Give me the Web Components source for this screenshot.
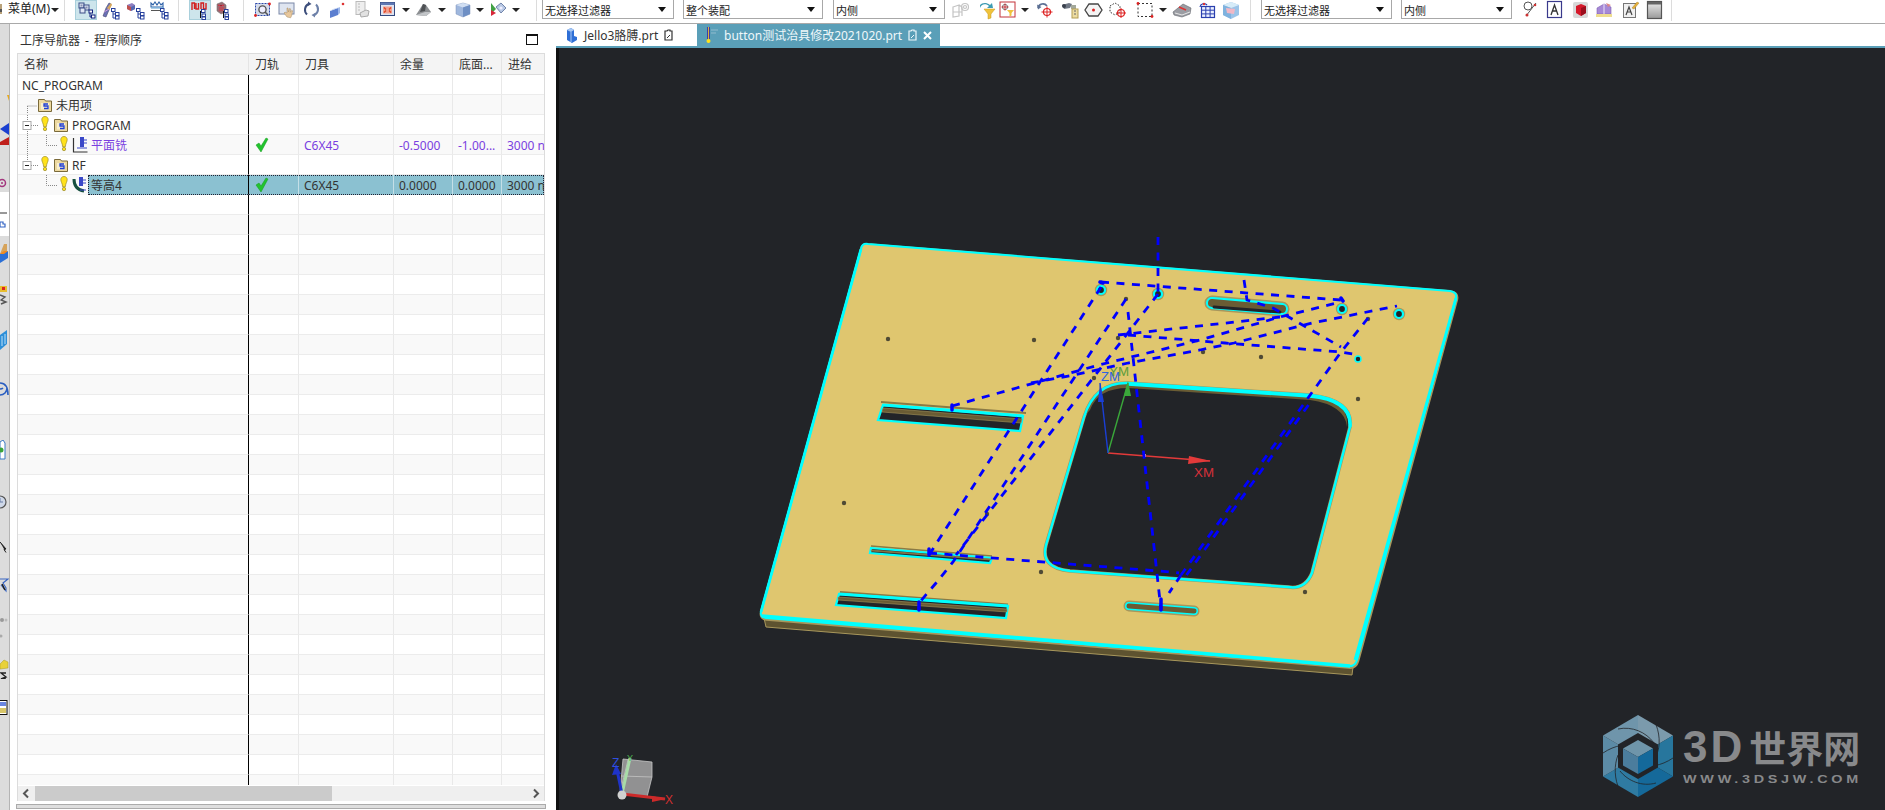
<!DOCTYPE html>
<html lang="zh">
<head>
<meta charset="utf-8">
<title>NX CAM</title>
<style>
    html, body {
        margin: 0;
        padding: 0;
        width: 1885px;
        height: 810px;
        overflow: hidden;
        background: #fff;
        font-family: "Noto Sans", "Noto Sans CJK SC", sans-serif;
        font-size: 12px;
        color: #333;
    }
    .main {
        display: flex;
        height: 786px;
    }
</style>
</head>
<body>
<nx-toolbar></nx-toolbar>
<div class="main">
    <nx-strip></nx-strip>
    <op-navigator></op-navigator>
    <nx-graphics></nx-graphics>
</div>
<script>
const tr = `<g fill="#fff" stroke="#27409c"><rect x="12.5" y="8.5" width="3.5" height="3"/><rect x="16.5" y="12.5" width="3.5" height="3"/><rect x="16.5" y="16" width="3.5" height="3"/><path d="M14 11.5V18h2M14 14h2" fill="none"/></g>`;
const tr2 = `<g fill="#fff" stroke="#27409c"><rect x="12.5" y="9.5" width="3.5" height="3"/><rect x="13" y="14" width="3.5" height="2.5"/><rect x="13" y="17" width="3.5" height="2.5"/><path d="M11.5 11v7" fill="none" stroke="#111"/></g>`;

const ICONS = {
    edge: `<rect x="16" y="4" width="6" height="10" fill="#b9a27a"/><rect x="16" y="9" width="6" height="3" fill="#555"/>`,
    ordProg: `<g fill="#dfe6f4" stroke="#3a4c86"><rect x="4" y="3" width="5" height="5"/><rect x="9" y="5" width="5" height="5"/><rect x="5" y="8" width="5" height="5"/></g>
        <g fill="#8890b0"><rect x="5.5" y="4.5" width="2" height="2"/><rect x="10.5" y="6.5" width="2" height="2"/></g>
        <g fill="#fff" stroke="#111f7c"><rect x="14" y="10" width="3.5" height="3"/><rect x="16.5" y="15" width="3.5" height="3"/><path d="M15 13v4h2" fill="none"/></g>`,
    ordMach: `<path d="M4 16l3-8 3-5 2 1-2 6-3 7z" fill="#6b70b5" stroke="#44496f" stroke-width=".6"/><path d="M8 8l4-5 1 2-3 5z" fill="#d9a85a"/><path d="M5 12l5-3" stroke="#c9d" stroke-width="1"/>${tr}`,
    ordGeom: `<path d="M3 5l5-2 3 2v4l-4 2-4-2z" fill="#8f7fc0"/><path d="M3 5l4 2v4l-4-2z" fill="#c0504d"/><path d="M7 7l4-2v4l-4 2z" fill="#5668b0"/>${tr}`,
    ordMeth: `<path d="M3 7V3l2 2 2-3 2 3 2-3 2 3 2-2v4z" fill="none" stroke="#2f62a8" stroke-width="1.1"/><rect x="3" y="7" width="13" height="1.6" fill="#7fb0d9"/><rect x="3" y="10" width="13" height="1" fill="#555"/>${tr}`,
    pathGen: `<path d="M3 10V3h2.5v6M7 3v6h2.5V3M12 9V3h2.5v6h2.5V3" fill="none" stroke="#d21f1f" stroke-width="1.4"/>${tr2}`,
    pathRep: `<path d="M5 4l5-2 4 3v7l-5 2-4-3z" fill="#9b6a72" stroke="#777" stroke-width=".6"/><path d="M6 5l3 1 3-1M7 8h5M7 10h4" stroke="#d34" stroke-width="1"/>${tr2}`,
    fitView: `<rect x="3.5" y="3.5" width="14" height="12" fill="#d5dceb" stroke="#2a47a8" stroke-dasharray="2 1"/><circle cx="10.5" cy="9.5" r="3.6" fill="#eef" stroke="#555" stroke-width="1.4"/><path d="M13 12l3 3" stroke="#555" stroke-width="1.6"/><circle cx="3.5" cy="15.5" r="1.4" fill="#d22"/><circle cx="17.5" cy="4" r="1.4" fill="#d22"/>`,
    pan: `<rect x="3" y="3" width="15" height="11" fill="#dfe5f0" stroke="#7b88a8"/><path d="M11 17l-3-4 1-1 2 1v-5l1 0 .5 4 1-3.5 1 .3-.2 3.5 1.5-2 .8.5-1 5-1 2z" fill="#e8c79c" stroke="#a58a62" stroke-width=".5"/>`,
    rotate: `<path d="M6 14.5a6.5 6.5 0 0 1 1.5-10.5" fill="none" stroke="#3d4f7c" stroke-width="2"/><path d="M15 4.5a6.5 6.5 0 0 1-1.5 10.5" fill="none" stroke="#6d80a8" stroke-width="2"/><path d="M7 1.5l3.5 2.5-3.5 2z" fill="#3d4f7c"/><path d="M14 17.5l-3.5-2.5 3.5-2z" fill="#6d80a8"/>`,
    extrude: `<path d="M4 11l8-3v7l-8 3z" fill="#5c7fd0"/><path d="M12 8l2-1v6l-2 2z" fill="#9db7ea"/><path d="M4 11l8-3 2-1-7 2z" fill="#c5d4f2"/><circle cx="17" cy="4" r="1.3" fill="#d33"/>`,
    sheet: `<rect x="5" y="1.5" width="9" height="13" fill="#eee" stroke="#bbb"/><path d="M7 4h2M7 7h2M7 10h2" stroke="#bbb"/><path d="M9 13l6-3 3 1-1 5-7 1z" fill="#e2e2e2" stroke="#aaa"/>`,
    layout: `<rect x="3.5" y="2.5" width="14" height="13" fill="#dde4f2" stroke="#35497e"/><rect x="3.5" y="2.5" width="14" height="2.5" fill="#5f78b3"/><rect x="6" y="6.5" width="9" height="7" fill="#f3a08f"/><path d="M7 7.5l2 2M14 7.5l-2 2M7 12.5l2-2M14 12.5l-2-2" stroke="#d42" stroke-width="1.2"/>`,
    shade: `<path d="M3 15l7-11 3 1 5 7-5 4z" fill="#8c8f92"/><path d="M10 4l3 1-1 6-5 1z" fill="#4e5154"/><path d="M3 15l9-3 6 0-5 4z" fill="#c2c5c8"/>`,
    cube: `<path d="M4 5l7-2 7 2v9l-7 3-7-3z" fill="#9fb7dd" stroke="#7c93bb" stroke-width=".5"/><path d="M4 5l7 2.5 7-2.500-7-2z" fill="#d0def2"/><path d="M11 7.500V17l7-3V5z" fill="#6e8fc4"/>`,
    visual: `<path d="M9 7l5-4 5 5-5 5z" fill="#b8c8e4" stroke="#7285ab"/><path d="M4 3v11l5-5z" fill="#41a144"/><path d="M4 16l5-3-5-3z" fill="#d8283a"/><circle cx="14" cy="8" r="1.600" fill="#eef"/>`,
    part: `<g fill="none" stroke="#c4c4c4" stroke-width="1.200"><path d="M3 7l6-2v11l-6 1zM9 5l3 2v9M3 12h9"/><circle cx="15" cy="7" r="3.500"/><circle cx="15" cy="7" r="1.500"/></g>`,
    filt1: `<path d="M4 8c1-4 6-5 9-2l-2 2 6 0-1-5-2 2c-4-3-8-2-10 0" fill="#3d9bb2"/><path d="M8 9h11l-4 5v4l-3 1v-5z" fill="#f0c33c" stroke="#c6971c" stroke-width=".5"/>`,
    filt2: `<rect x=".5" y=".5" width="15" height="15" transform="translate(2.500 1.500)" fill="#fff" stroke="#c4333b"/><circle cx="8" cy="7" r="2.600" fill="none" stroke="#777"/><path d="M8 3.500v7M4.500 7h7" stroke="#c4333b"/><path d="M10 10h7l-2.500 3v2.500l-2 1V13z" fill="#f0c33c"/>`,
    undoAim: `<path d="M4 8a5 5 0 0 1 9-2" fill="none" stroke="#5b6f93" stroke-width="1.600"/><path d="M3 4.500l1 5 3.500-2.500z" fill="#5b6f93"/><circle cx="13" cy="12" r="3.500" fill="none" stroke="#d22" stroke-width="1.200"/><path d="M13 6.500v11M7.500 12h11" stroke="#d22"/>`,
    binocs: `<path d="M3 5l7-2 3 1-2 4-6 1z" fill="#6f7784"/><circle cx="5" cy="6" r="2" fill="#39404c"/><rect x="12" y="5" width="5" height="4" fill="#a3a89a"/><rect x="13" y="9" width="6" height="9" fill="#ecdca2" stroke="#b39d55"/><path d="M15 11h2M15 14h2" stroke="#666"/>`,
    hexa: `<path d="M6 4h9l4 6-4 6H6l-4-6z" fill="#f4f4f4" stroke="#444" stroke-width="1.300"/><circle cx="10.500" cy="10" r="1.500" fill="#d22"/>`,
    dotAim: `<path d="M3 6l5-3 5 3v6l-5 3-5-3z" fill="#fff" stroke="#333" stroke-dasharray="1.500 1.500"/><circle cx="14" cy="13" r="3.500" fill="none" stroke="#d22" stroke-width="1.200"/><path d="M14 8v10M9 13h10" stroke="#d22"/>`,
    dashBox: `<rect x="4" y="3.500" width="14" height="13" fill="none" stroke="#333" stroke-dasharray="2 2"/><circle cx="4" cy="3.500" r="1.400" fill="#d22"/><circle cx="18" cy="16.500" r="1.400" fill="#d22"/>`,
    clipBox: `<path d="M2 12l10-8 8 4-1 6-8 3-8-2z" fill="#9b9da3" stroke="#62656b" stroke-width=".6"/><path d="M8 7l7 3" stroke="#d33" stroke-width="1.600"/><path d="M4 13l7 2 8-3" fill="none" stroke="#e6e6e6"/>`,
    grid: `<rect x="5.500" y="6.500" width="13" height="11" fill="#eaf0ff" stroke="#2a3fae" stroke-width="1.200"/><path d="M9.800 6.500v11M14.100 6.500v11M5.500 10.200h13M5.500 13.900h13" stroke="#2a3fae"/><path d="M4 7a4 4 0 0 1 7-2" fill="none" stroke="#2a3fae" stroke-width="1.200"/><circle cx="8" cy="4" r="1.200" fill="#d33"/>`,
    glass: `<path d="M3 5l8-3 8 3v10l-8 4-8-4z" fill="#9cc4e8"/><path d="M3 5l8 3 8-3-8-3z" fill="#d7ecf8"/><path d="M3 5v10l8 4V8z" fill="#7fb2de"/><path d="M6 8l9 1-1 5-7-1z" fill="#f1b8c6"/>`,
    circleLine: `<circle cx="8" cy="6" r="4" fill="#fff" stroke="#555"/><path d="M6 16l10-13" stroke="#555"/><circle cx="7" cy="15" r="1.500" fill="#c33"/><circle cx="15" cy="5" r="1.300" fill="#c33"/>`,
    fontA: `<rect x="3.500" y="1.500" width="14" height="16" fill="#fff" stroke="#3a3a8c" stroke-width="1.200"/><path d="M7 15l3.500-10 3.500 10M8.500 11h4.500" fill="none" stroke="#333" stroke-width="1.300"/>`,
    redCube: `<rect x="3" y="2" width="15" height="16" rx="2" fill="#d8d8d8"/><path d="M6 6l5-2 5 2v7l-5 3-5-3z" fill="#d6192b"/><path d="M11 8v8l5-3V6z" fill="#9c0e1d"/>`,
    purple: `<path d="M3 8l7-4 7 3v7H3z" fill="#a689d6" stroke="#7f60b4" stroke-width=".6"/><path d="M10 4v10" stroke="#ece3f7"/><path d="M12 3l5 2-3 2z" fill="#d88"/><rect x="2" y="14" width="16" height="3" fill="#eedd8f"/>`,
    fontEdit: `<rect x="3.500" y="3.500" width="12" height="14" fill="#f0f0f0" stroke="#777"/><path d="M6 15l3-8 3 8M7 12h4" fill="none" stroke="#444" stroke-width="1.200"/><path d="M12 8l5-6 2 1-5 6z" fill="#e6b13a" stroke="#a5781e" stroke-width=".4"/>`,
    panel: `<rect x="3.500" y="1.500" width="14" height="17" fill="url(#g)" stroke="#555" stroke-width="1.200"/><rect x="4" y="2" width="13" height="2.500" fill="#666"/><defs><linearGradient id="g" x1="0" y1="0" x2="0" y2="1"><stop offset="0" stop-color="#eee"/><stop offset="1" stop-color="#999"/></linearGradient></defs>`
};

class NxTool extends HTMLElement {
    constructor(){
        super();
        this.shadowDOM = this.attachShadow({mode:"open"});
    }
    connectedCallback(){
        this.shadowDOM.innerHTML = `
        <style>
            :host {
                display: flex;
                flex: 0 0 auto;
                width: 22px;
                height: 20px;
            }
            svg { display: block; }
        </style>
        <svg width="22" height="20" viewBox="0 0 22 20">${ICONS[this.getAttribute("icon")] || ""}</svg>`;
    }
}
customElements.define("nx-tool", NxTool);

class NxCombo extends HTMLElement {
    constructor(){
        super();
        this.shadowDOM = this.attachShadow({mode:"open"});
        this.shadowDOM.innerHTML = `
        <style>
            :host {
                display: flex;
                flex: 0 0 auto;
                align-items: center;
                justify-content: space-between;
                box-sizing: border-box;
                height: 21px;
                margin-top: -2px;
                padding: 2px 7px 0 2px;
                border: 1px solid #a8a8a8;
                background: #fff;
                font-size: 11px;
                color: #222;
            }
            i {
                width: 0;
                height: 0;
                border: 4px solid transparent;
                border-top: 5px solid #111;
                border-bottom: 0;
            }
        </style>
        <slot></slot><i></i>`;
    }
}
customElements.define("nx-combo", NxCombo);

// toolbar items are placed by their centre x, each item pushes the next one with a margin
const TOOLS = [
    ["icon","edge",-9],["text","菜单(M)",28,40],["arrow",55],["sep",64],
    ["icon","ordProg",86,1],["icon","ordMach",110],["icon","ordGeom",135],["icon","ordMeth",159],["sep",178],
    ["icon","pathGen",200,1],["icon","pathRep",223],["sep",243],
    ["icon","fitView",263],["icon","pan",287],["icon","rotate",312],["icon","extrude",337],["icon","sheet",362],
    ["icon","layout",388],["arrow",406],["icon","shade",424],["arrow",442],["icon","cube",463],["arrow",480],["icon","visual",498],["arrow",516],["sep",536],
    ["combo","无选择过滤器",542,132],["combo","整个装配",683,140],["combo","内侧",833,112],
    ["icon","part",961],["icon","filt1",987],["icon","filt2",1008],["arrow",1025],["icon","undoAim",1045],["icon","binocs",1070],
    ["icon","hexa",1094],["icon","dotAim",1118],["icon","dashBox",1145],["arrow",1163],["icon","clipBox",1182],["icon","grid",1207],["icon","glass",1231],["sep",1250],
    ["combo","无选择过滤器",1261,131],["combo","内侧",1401,111],
    ["icon","circleLine",1531],["icon","fontA",1555],["icon","redCube",1581],["icon","purple",1605],["icon","fontEdit",1631],["icon","panel",1655],["sep",1671]
];

class NxToolbar extends HTMLElement {
    constructor(){
        super();
        this.shadowDOM = this.attachShadow({mode:"open"});
    }
    connectedCallback(){
        let right = 0;
        let html = "";
        for(const t of TOOLS){
            const kind = t[0];
            if(kind === "icon"){
                const left = t[2] - 11;
                html += `<nx-tool class="${t[3] ? "on" : ""}" icon="${t[1]}" style="margin-left:${left-right}px"></nx-tool>`;
                right = left + 22;
            } else if(kind === "arrow"){
                const left = t[1] - 4;
                html += `<i class="arrow" style="margin-left:${left-right}px"></i>`;
                right = left + 8;
            } else if(kind === "sep"){
                html += `<b class="sep" style="margin-left:${t[1]-right}px"></b>`;
                right = t[1] + 1;
            } else if(kind === "combo"){
                html += `<nx-combo style="margin-left:${t[2]-right}px;width:${t[3]}px">${t[1]}</nx-combo>`;
                right = t[2] + t[3];
            } else {
                const left = t[2] - t[3]/2;
                html += `<span class="menu" style="margin-left:${left-right}px;width:${t[3]}px">${t[1]}</span>`;
                right = left + t[3];
            }
        }
        this.shadowDOM.innerHTML = `
        <style>
            :host {
                display: flex;
                box-sizing: border-box;
                height: 24px;
                align-items: flex-start;
                border-bottom: 1px solid #a9a9a9;
                overflow: hidden;
                background: #fff;
            }
            nx-tool.on {
                background: #cde5ec;
                box-shadow: inset 0 0 0 1px #a9d0dc;
            }
            .arrow {
                flex: 0 0 auto;
                width: 0;
                height: 0;
                margin-top: 8px;
                border: 4px solid transparent;
                border-top: 4px solid #222;
                border-bottom: 0;
            }
            .sep {
                flex: 0 0 auto;
                width: 1px;
                height: 21px;
                background: #dcdcdc;
            }
            .menu {
                flex: 0 0 auto;
                white-space: nowrap;
                font-size: 12px;
                line-height: 18px;
                color: #222;
            }
        </style>${html}`;
    }
}
customElements.define("nx-toolbar", NxToolbar);

const STRIP = [
    [95,`<path d="M7 0h9v6H9z" fill="#e8a91f"/>`],
    [123,`<path d="M0 6l9-6v12z" fill="#1a3fd0"/>`],
    [137,`<path d="M0 5l9-5v8H0z" fill="#c0201c"/>`],
    [178,`<circle cx="2" cy="5" r="3.500" fill="none" stroke="#a3357d" stroke-width="1.500"/><circle cx="2" cy="5" r="1" fill="#a3357d"/>`],
    [212,`<path d="M0 1h7" stroke="#333"/>`],
    [221,`<path d="M0 1v5h5V3H3V1z" fill="none" stroke="#3465c4" stroke-width="1.200"/>`],
    [244,`<path d="M4 0h3v10H0z" fill="#d6a35a"/><path d="M0 10l8-3v7l-8 5z" fill="#2a6fd6"/><path d="M0 10h4l4-3H4z" fill="#f08a1f"/>`],
    [285,`<rect x="0" y="1" width="7" height="6" fill="#e8bd2f"/><rect x="2" y="2" width="3" height="3" fill="#d22"/><path d="M0 10l5 2-4 3 5 2-5 2" fill="none" stroke="#555" stroke-width="1.400"/>`],
    [330,`<path d="M0 5l7-5v14l-7 6z" fill="#2d8fd8"/><path d="M2 6v10M5 4v10" stroke="#bfe1f7"/>`],
    [381,`<path d="M0 14c4 0 7-3 7-7M0 8c1 0 2 0 3-1M0 2c6 0 8 5 8 12" fill="none" stroke="#2a5ec0" stroke-width="1.600"/>`],
    [440,`<path d="M0 2l3-2 2 3v16H0z" fill="#fff" stroke="#3a7ac4"/><circle cx="1" cy="10" r="2.500" fill="#3aa43a"/>`],
    [491,`<circle cx="0" cy="11" r="6" fill="#cfd8e8" stroke="#555" stroke-width="1.200"/><path d="M0 7v4h3" stroke="#6a7fa8" fill="none"/>`],
    [540,`<path d="M0 2l6 7-2 .500 2 3" fill="#222" stroke="#222"/>`],
    [578,`<path d="M0 1h8L3 5l3 5v3L1 7" fill="none" stroke="#3a66c2" stroke-width="1.100"/><path d="M2 6l3 6" stroke="#222" stroke-width="1.600"/>`],
    [617,`<circle cx="2" cy="3" r="2" fill="#999"/><circle cx="6" cy="3" r="1.500" fill="#bbb"/>`],
    [634,`<circle cx="1" cy="2" r="1.500" fill="#aaa"/>`],
    [659,`<path d="M0 5l4-4 4 2v6l-8 1z" fill="#e8d13a" stroke="#a99b25" stroke-width=".5"/><path d="M6 14H1l5 4-5 2h5" fill="none" stroke="#222" stroke-width="1.400"/>`],
    [700,`<rect x="-3" y=".5" width="10" height="14" fill="#fff" stroke="#111"/><rect x="0" y="2" width="6" height="4" fill="#6a86e0"/><rect x="0" y="8" width="6" height="5" fill="#d8c668"/>`]
];

class NxStrip extends HTMLElement {
    constructor(){
        super();
        this.shadowDOM = this.attachShadow({mode:"open"});
    }
    connectedCallback(){
        let y = 24;
        const html = STRIP.map(([top, art]) => {
            const gap = top - y;
            y = top + 20;
            return `<svg width="9" height="20" viewBox="0 0 9 20" style="margin-top:${gap}px">${art}</svg>`;
        }).join("");
        this.shadowDOM.innerHTML = `
        <style>
            :host {
                display: flex;
                flex-direction: column;
                flex: 0 0 10px;
                width: 10px;
                height: 786px;
                box-sizing: border-box;
                border-right: 1px solid #b4b4b4;
                background: linear-gradient(#dcdcdc 0 168px, #fff 168px 212px, #dcdcdc 212px);
                overflow: hidden;
            }
            svg { display: block; flex: 0 0 auto; }
        </style>${html}`;
    }
}
customElements.define("nx-strip", NxStrip);

const bulb = x => `<g transform="translate(${x} 0)"><path d="M0 1.500c2.200 0 3.200 1.600 3.200 3.200 0 2-1.600 3.400-1.800 7h-2.800c-.2-3.600-1.800-5-1.800-7 0-1.600 1-3.200 3.200-3.200z" fill="#ffe21a" stroke="#9a8a2a" stroke-width=".7"/><circle cy="14" r="1.700" fill="#ffe21a" stroke="#9a8a2a" stroke-width=".7"/></g>`;
const folder = x => `<g transform="translate(${x} 3)"><path d="M.5 3V1.500h6l1 1.500h6v10.500H.5z" fill="#edd9a0" stroke="#7a6a3a"/><rect x="3" y="5" width="8" height="6.500" fill="#f8efce"/><path d="M10 6H6v2h4v2.500H6" fill="none" stroke="#1f3fd4" stroke-width="1.300"/></g>`;
const dotted = d => `<path d="${d}" fill="none" stroke="#888" stroke-dasharray="1 1"/>`;
const expander = x => `<rect x="${x-4.500}" y="6.500" width="8" height="8" fill="#fff" stroke="#aaa"/><path d="M${x-2.500} 10.500h4" stroke="#222"/>`;

const ROWS = [
    {w:4, tree:"", text:"NC_PROGRAM"},
    {w:38, tree:dotted("M27.500 11h9M27.500 11v9") + folder(38), text:"未用项"},
    {w:54, tree:dotted("M27.500 0v20M31 10.500h8") + expander(27.500) + bulb(45) + folder(54), text:"PROGRAM"},
    {w:73, tree:dotted("M27.500 0v20M46.500 0v10.500h11") + bulb(64) +
        `<path d="M73.500 3v14h14" fill="none" stroke="#333" stroke-width="1.200"/><rect x="80" y="2" width="4" height="10" fill="#3a48c8"/><path d="M84 5h3M84 8h3M77 13h10" stroke="#3a48c8" stroke-width="1.200"/>`,
        text:"平面铣", purple:true, path:true, tool:"C6X45", a:"-0.5000", b:"-1.00...", feed:"3000 n"},
    {w:54, tree:dotted("M27.500 0v11M31 10.500h8") + expander(27.500) + bulb(45) + folder(54), text:"RF"},
    {w:73, tree:dotted("M46.500 0v10.500h11") + bulb(64) +
        `<path d="M74 4c0 6 3 11 10 12" fill="none" stroke="#164f3f" stroke-width="3"/><rect x="79" y="2" width="4" height="9" fill="#3a48c8"/><path d="M83 5h3M83 8h3M80 15h6" stroke="#3a48c8" stroke-width="1.200"/>`,
        text:"等高4", selected:true, path:true, tool:"C6X45", a:"0.0000", b:"0.0000", feed:"3000 n"}
];

class OpRow extends HTMLElement {
    constructor(){
        super();
        this.shadowDOM = this.attachShadow({mode:"open"});
    }
    set row(row){
        this._row = row;
        this.render();
    }
    render(){
        const r = this._row;
        this.shadowDOM.innerHTML = `
        <style>
            :host {
                display: grid;
                grid-template-columns: 231px 50px 95px 59px 49px 43px;
                box-sizing: border-box;
                height: 20px;
                line-height: 22px;
                font-size: 12px;
                color: ${r.purple ? "#7a3fe0" : "#333"};
                background: ${r.odd ? "#f9f9f9" : "#fff"};
                position: relative;
            }
            div {
                box-sizing: border-box;
                border-right: 1px solid #e9e9e9;
                border-bottom: 1px solid #ececec;
                overflow: hidden;
                white-space: nowrap;
                min-width: 0;
            }
            div:last-child { border-right: 0; }
            .name {
                display: flex;
                align-items: flex-start;
                border-right: 1px solid #000;
            }
            .name svg { flex: 0 0 auto; display: block; }
            .path { padding: 2px 0 0 6px; }
            .path svg { display: block; }
            .t { padding-left: 5px; }
            .sel {
                position: absolute;
                left: 70px;
                top: 0;
                right: 0;
                height: 20px;
                box-sizing: border-box;
                background: #8bc1d1;
                border: 1px dotted #223;
                z-index: 0;
            }
            .name, .path, .t { position: relative; z-index: 1; }
            :host(.selected) div { border-right-color: #c4dfe7; border-bottom-color: transparent; }
            :host(.selected) .name { border-right-color: #000; }
        </style>
        ${r.selected ? `<b class="sel"></b>` : ""}
        <div class="name"><svg width="${r.w}" height="20" viewBox="18 0 ${r.w} 20">${r.tree}</svg><span>${r.text}</span></div>
        <div class="path">${r.path ? `<svg width="14" height="16" viewBox="0 0 14 16"><path d="M1 8l3-2 2 3 5-8 2 1-7 13z" fill="#22c42e" stroke="#129a1c" stroke-width=".5"/></svg>` : ""}</div>
        <div class="t">${r.tool || ""}</div>
        <div class="t">${r.a || ""}</div>
        <div class="t">${r.b || ""}</div>
        <div class="t">${r.feed || ""}</div>`;
        if(r.selected) this.classList.add("selected");
    }
}
customElements.define("op-row", OpRow);

class OpNavigator extends HTMLElement {
    constructor(){
        super();
        this.shadowDOM = this.attachShadow({mode:"open"});
    }
    connectedCallback(){
        this.shadowDOM.innerHTML = `
        <style>
            :host {
                display: flex;
                flex-direction: column;
                flex: 0 0 546px;
                width: 546px;
                height: 786px;
                box-sizing: border-box;
                padding: 0 0 0 7px;
                background: #fff;
            }
            .title {
                display: flex;
                justify-content: space-between;
                align-items: center;
                height: 29px;
                padding: 2px 18px 0 3px;
                box-sizing: border-box;
                font-size: 12px;
                word-spacing: 2px;
                color: #333;
            }
            .title i {
                width: 10px;
                height: 8px;
                border: 1px solid #111;
                border-top-width: 2px;
            }
            .table {
                width: 528px;
                border: 1px solid #dcdcdc;
                border-bottom: 0;
                box-sizing: border-box;
            }
            .head {
                display: grid;
                grid-template-columns: 231px 50px 95px 59px 49px 43px;
                height: 21px;
                line-height: 22px;
                background: #f4f4f4;
                border-bottom: 1px solid #dcdcdc;
                box-sizing: border-box;
            }
            .head span {
                padding-left: 6px;
                border-right: 1px solid #e4e4e4;
                white-space: nowrap;
                overflow: hidden;
            }
            .head span:last-child { border-right: 0; }
            .rows {
                height: 710px;
                overflow: hidden;
            }
            .scroll {
                display: flex;
                align-items: center;
                height: 15px;
                margin-top: 1px;
                background: #efefef;
            }
            .scroll svg { flex: 0 0 auto; display: block; }
            .thumb {
                flex: 0 0 297px;
                height: 15px;
                background: #cbcbcb;
            }
            .fill { flex: 1; }
            .grip {
                width: 530px;
                height: 5px;
                margin: 3px 0 0 -1px;
                box-sizing: border-box;
                background: #dedede;
                border: 1px solid #ababab;
            }
        </style>
        <div class="title"><span>工序导航器 - 程序顺序</span><i></i></div>
        <div class="table">
            <div class="head"><span>名称</span><span>刀轨</span><span>刀具</span><span>余量</span><span>底面...</span><span>进给</span></div>
            <div class="rows"></div>
            <div class="scroll">
                <svg width="17" height="15" viewBox="0 0 17 15"><path d="M10 3.500L6 7.500l4 4" fill="none" stroke="#555" stroke-width="2"/></svg>
                <div class="thumb"></div>
                <div class="fill"></div>
                <svg width="17" height="15" viewBox="0 0 17 15"><path d="M7 3.500l4 4-4 4" fill="none" stroke="#555" stroke-width="2"/></svg>
            </div>
        </div>
        <div class="grip"></div>`;
        const rows = this.shadowDOM.querySelector(".rows");
        for(let i = 0; i < 36; i++){
            const el = document.createElement("op-row");
            el.row = Object.assign({w:4, tree:"", text:"", odd: i % 2 === 1}, ROWS[i] || {});
            rows.appendChild(el);
        }
    }
}
customElements.define("op-navigator", OpNavigator);

class NxTab extends HTMLElement {
    constructor(){
        super();
        this.shadowDOM = this.attachShadow({mode:"open"});
        this.shadowDOM.innerHTML = `
        <style>
            :host {
                display: flex;
                align-items: center;
                box-sizing: border-box;
                height: 22px;
                padding: 0 0 0 8px;
                gap: 6px;
                font-size: 12px;
                white-space: nowrap;
                color: #333;
                background: #fff;
            }
            :host([active]) {
                color: #eef7fa;
                background: #5a9fb8;
            }
            svg { display: block; flex: 0 0 auto; }
        </style>
        <slot name="icon"></slot><slot></slot>
        <svg width="9" height="12" viewBox="0 0 9 12"><path d="M1 2h2l1-1h2v1h2v9H1z" fill="none" stroke="currentColor" stroke-width="1.200"/><path d="M3 9l3-3" stroke="currentColor"/></svg>
        <slot name="close"></slot>`;
    }
}
customElements.define("nx-tab", NxTab);

class NxWatermark extends HTMLElement {
    constructor(){
        super();
        this.shadowDOM = this.attachShadow({mode:"open"});
        this.shadowDOM.innerHTML = `
        <style>
            :host {
                position: absolute;
                left: 1046px;
                top: 667px;
                display: flex;
                align-items: flex-start;
                gap: 9px;
                color: #88898b;
            }
            svg { display: block; flex: 0 0 auto; }
            .big {
                display: flex;
                align-items: center;
                height: 40px;
                margin-top: 12px;
                font-family: "Noto Sans CJK SC", sans-serif;
                font-weight: 700;
                font-size: 37px;
                line-height: 40px;
                white-space: nowrap;
            }
            .big b {
                font-family: "Liberation Sans", sans-serif;
                font-size: 44px;
                letter-spacing: 3px;
                margin-right: 4px;
            }
            .url {
                font-family: "Liberation Sans", sans-serif;
                font-size: 11.500px;
                font-weight: 700;
                letter-spacing: 3px;
                line-height: 14px;
                margin-top: 5px;
                white-space: nowrap;
                transform: scaleX(1.25);
                transform-origin: left;
            }
        </style>
        <svg width="72" height="82" viewBox="0 0 72 82">
            <path d="M36 0L71 20.500 36 41z" fill="#7b9aac"/>
            <path d="M71 20.500V61.500L36 41z" fill="#27769d"/>
            <path d="M71 61.500L36 82 36 41z" fill="#15699a"/>
            <path d="M36 82L1 61.500 36 41z" fill="#2f7ba2"/>
            <path d="M1 61.500V20.500L36 41z" fill="#5c8ba6"/>
            <path d="M1 20.500L36 0 36 41z" fill="#6f95ab"/>
            <g fill="none" stroke="#222428" stroke-width=".8">
                <path d="M16 14c14-3 28 3 36 14"/><path d="M52 5c6 12 7 26 2 36"/><path d="M71 43c-12 8-24 10-35 6"/>
                <path d="M54 68c-14 4-28-2-36-12"/><path d="M18 76c-6-12-6-26-2-36"/><path d="M1 38c12-8 24-10 35-6"/>
            </g>
            <path d="M36 18L56 29.500V52.500L36 64 16 52.500V29.500z" fill="#222428"/>
            <path d="M36 25L51 33.500 36 42 21 33.500z" fill="#6f95aa"/>
            <path d="M21 33.500L36 42V59L21 50.500z" fill="#4b7d9d"/>
            <path d="M51 33.500L36 42V59L51 50.500z" fill="#14699b"/>
        </svg>
        <div>
            <div class="big"><b>3D</b>世界网</div>
            <div class="url">WWW.3DSJW.COM</div>
        </div>`;
    }
}
customElements.define("nx-watermark", NxWatermark);

const slotBand = (pts, band) => `<polygon points="${pts}" fill="#222428" stroke="#00ffff" stroke-width="2.200"/><polygon points="${band}" fill="#6a5c34" stroke="#a5935a" stroke-width=".6"/>`;
const hole = (x,y) => `<circle cx="${x}" cy="${y}" r="2.200" fill="#4f4a35"/>`;
const ring = (x,y) => `<circle cx="${x}" cy="${y}" r="6.200" fill="#a8975c"/><circle cx="${x}" cy="${y}" r="4" fill="#222428" stroke="#00ffff" stroke-width="2.200"/>`;

const BLUE = [
    "1158 237 1158 294",
    "1101 282 1341 300",
    "1101 287 929 555",
    "1126 299 953 562 936 583 919 603 919 610",
    "1158 294 956 555",
    "952 406 1099 365 1200 340 1280 317 1341 302",
    "1031 383 1074 375 1128 363 1200 350 1234 343 1312 323 1397 306",
    "1118 335 1280 317",
    "1128 335 1225 343 1341 352 1358 355",
    "1244 280 1247 300 1273 308 1341 347",
    "1368 318 1341 352 1303 405",
    "1303 405 1181 575",
    "1308.500 405 1186.500 575",
    "1181 575 1169 593",
    "1128 312 1161 610",
    "929 553 1171 572 1179 573"
];

class NxViewport extends HTMLElement {
    constructor(){
        super();
        this.shadowDOM = this.attachShadow({mode:"open"});
    }
    connectedCallback(){
        const plate = "M868 244L1450 291Q1457 292 1456 298L1357 660Q1355 667 1348 666L766 618Q760 617 761 612L861 249Q862 243 868 244Z";
        const hollow = "M1084 417Q1095 382 1128 383L1310 395Q1354 400 1350 427L1312 573Q1305 590 1288 587L1070 571Q1040 568 1046 545Z";
        this.shadowDOM.innerHTML = `
        <style>
            :host {
                display: block;
                flex: 1;
                position: relative;
                height: 762px;
                background: #222428;
                overflow: hidden;
            }
            svg { display: block; }
            text { font-family: "Liberation Sans", sans-serif; }
        </style>
        <svg width="1329" height="762" viewBox="556 48 1329 762">
            <rect x="556" y="48" width="3" height="762" fill="#111"/>
            <polygon points="764 618 1353 667 1352 675 766 627" fill="#5e5330" stroke="#a8975c" stroke-width="1"/>
            <path d="${plate}" fill="#dfc66f" stroke="#a8975c" stroke-width="3.500" transform="translate(.5 1)"/>
            <path d="${plate}" fill="#dfc66f" stroke="#00ffff" stroke-width="2"/>
            <path d="M762 616L1350 666" stroke="#00ffff" stroke-width="3.500"/>
            <path d="M1456 298L1355 660" stroke="#00ffff" stroke-width="2.800"/>
            <path d="M861 249L761 612" stroke="#00ffff" stroke-width="2.800"/>
            <path d="${hollow}" fill="#222428" stroke="#a8975c" stroke-width="3.500"/>
            <path d="M1090 410Q1098 388 1128 388L1310 400Q1345 405 1347 427Q1350 400 1310 395L1128 383Q1095 382 1084 417Z" fill="#6a5c34"/>
            <path d="${hollow}" fill="none" stroke="#00ffff" stroke-width="2.400"/>
            <path d="M1128 384L1310 396Q1352 400 1350 427" fill="none" stroke="#00ffff" stroke-width="3.400"/>
            <path d="M881 402L1026 413" stroke="#8a7a45" stroke-width="2"/>
            <path d="M840 592L1008 604.500" stroke="#8a7a45" stroke-width="2"/>
            <path d="M871 546L992 556" stroke="#8a7a45" stroke-width="1.500"/>
            ${slotBand("883 405 1023 416 1020 431 878 420", "883 408 1022 419 1021 423 882 412")}
            ${slotBand("871 548 992 558 990 563 870 553", "871 550 991 559 991 560 871 551")}
            ${slotBand("839 594 1008 606 1006 618 836 605", "838 597 1007 609 1007 612 838 600")}
            <path d="M883 405L1023 416M839 594L1008 606" stroke="#00ffff" stroke-width="3"/>
            <path d="M1212 303L1282 309" stroke="#a8975c" stroke-width="15" stroke-linecap="round"/>
            <path d="M1212 303L1282 309" stroke="#00ffff" stroke-width="12" stroke-linecap="round"/>
            <path d="M1212 303L1282 309" stroke="#6a5c34" stroke-width="8" stroke-linecap="round"/>
            <path d="M1214 307L1280 312" stroke="#222428" stroke-width="3" stroke-linecap="round"/>
            <path d="M1129 606L1194 611" stroke="#a8975c" stroke-width="11" stroke-linecap="round"/>
            <path d="M1129 606L1194 611" stroke="#00ffff" stroke-width="8" stroke-linecap="round"/>
            <path d="M1129 606L1194 611" stroke="#6a5c34" stroke-width="5" stroke-linecap="round"/>
            ${[[888,339],[1034,340],[1118,338],[1126,299],[1203,352],[1261,357],[1358,399],[1094,378],[844,503],[987,514],[1041,572],[1305,592],[1368,319]].map(p => hole(p[0],p[1])).join("")}
            ${[[1101,290],[1158,294],[1342,309],[1399,314]].map(p => ring(p[0],p[1])).join("")}
            <circle cx="1358" cy="359" r="3" fill="#222428" stroke="#00ffff" stroke-width="1.500"/>
            <path d="M1108 453L1210 461" stroke="#e33a3a" stroke-width="1.600"/>
            <path d="M1189 456L1211 461 1188 464z" fill="#e33a3a"/>
            <rect x="1143" y="454" width="3" height="3" fill="#e0a0a8"/>
            <path d="M1108 453L1128 383" stroke="#3aa83a" stroke-width="1.400"/>
            <path d="M1124 396L1128 381 1131 396z" fill="#3aa83a"/>
            <path d="M1108 453L1100 383" stroke="#1a3fd6" stroke-width="1.400"/>
            <path d="M1098 402L1100 383 1104 402z" fill="#1a3fd6"/>
            <text x="1194" y="477" font-size="13" fill="#d5303a" textLength="20" lengthAdjust="spacingAndGlyphs">XM</text>
            <text x="1109" y="376" font-size="13" fill="#5c9c3a" textLength="20" lengthAdjust="spacingAndGlyphs">YM</text>
            <text x="1101" y="381" font-size="13" fill="#2f63e0" textLength="19" lengthAdjust="spacingAndGlyphs">ZM</text>
            <g fill="none" stroke="#0000ff" stroke-width="2.800" stroke-dasharray="8 7.500">
                ${BLUE.map(p => `<polyline points="${p}"/>`).join("")}
            </g>
            <g stroke="#0000ff" stroke-width="3.500" stroke-linecap="round">
                <path d="M952 405v5M929 549v6M919 602v8M1161 599v11M1100 282l3 1M1341 298l2 3"/>
            </g>
            <g transform="translate(590 740)">
                <path d="M33 19L62 22 62 37 57 57 30 53z" fill="#a5a5a5" fill-opacity=".85" stroke="#c8c8c8" stroke-width=".8"/>
                <path d="M31 36L62 37M38 20L30 53" stroke="#c4c4c4" stroke-width=".8" fill="none"/>
                <path d="M32 54L40 18" stroke="#a8dca8" stroke-width="3"/>
                <path d="M32 54L75 59" stroke="#cc2a2a" stroke-width="3"/>
                <path d="M62 56L76 59 62 62z" fill="#cc2a2a"/>
                <path d="M32 54L27 30" stroke="#1f33c8" stroke-width="3"/>
                <path d="M22 35L26 24 31 34z" fill="#1f33c8"/>
                <circle cx="32" cy="55" r="4.500" fill="#d0d0d0"/>
                <text x="22" y="27" font-size="12" fill="#2f4fe0">Z</text>
                <text x="37" y="21" font-size="9" fill="#4caf50">Y</text>
                <text x="75" y="64" font-size="12" fill="#d03030">X</text>
            </g>
        </svg>
        <nx-watermark></nx-watermark>`;
    }
}
customElements.define("nx-viewport", NxViewport);

class NxGraphics extends HTMLElement {
    constructor(){
        super();
        this.shadowDOM = this.attachShadow({mode:"open"});
        this.shadowDOM.innerHTML = `
        <style>
            :host {
                display: flex;
                flex-direction: column;
                flex: 1;
                min-width: 0;
                height: 786px;
            }
            .tabs {
                display: flex;
                height: 22px;
                border-bottom: 2px solid #5a9fb8;
            }
            nx-tab:first-child { width: 141px; }
            nx-tab:nth-child(2) { width: 243px; }
            svg { display: block; }
        </style>
        <div class="tabs">
            <nx-tab>
                <svg slot="icon" width="14" height="16" viewBox="0 0 14 16"><path d="M3 3l4-2 3 2v6l3 1v3l-5 3-5-3z" fill="#2f6fd6"/><path d="M3 3l4 2 3-2-3-2z" fill="#a8c8f4"/><path d="M7 5v10" stroke="#a8c8f4"/></svg>
                Jello3胳膊.prt
            </nx-tab>
            <nx-tab active>
                <svg slot="icon" width="13" height="18" viewBox="0 0 13 18"><rect x="2" y="1" width="3" height="12" fill="#3f3fa8"/><path d="M3.500 1v12" stroke="#d6b33a"/><path d="M6 4h7M6 7h5" stroke="#7fb3c6" stroke-width="1.500"/><circle cx="3.500" cy="15" r="2" fill="#ffe21a"/></svg>
                button测试治具修改2021020.prt
                <svg slot="close" width="9" height="9" viewBox="0 0 9 9"><path d="M1 1l7 7M8 1L1 8" stroke="#fff" stroke-width="2"/></svg>
            </nx-tab>
        </div>
        <nx-viewport></nx-viewport>`;
    }
}
customElements.define("nx-graphics", NxGraphics);
</script>
</body>
</html>
